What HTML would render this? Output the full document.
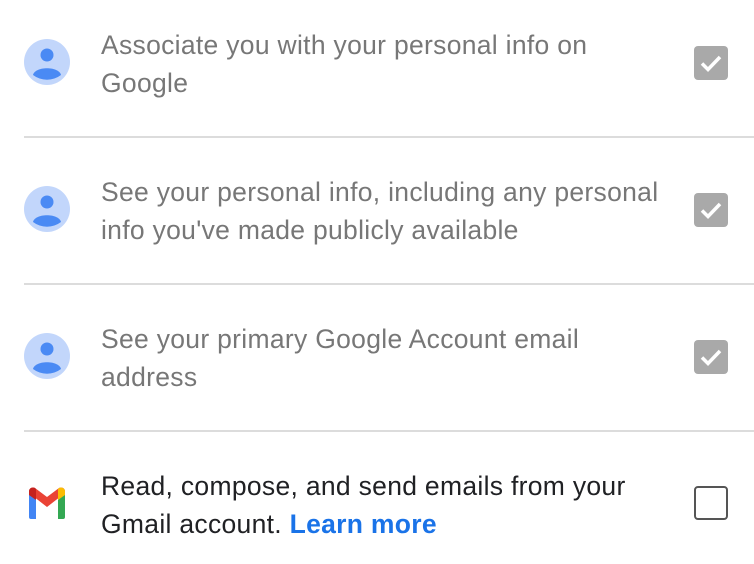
<!DOCTYPE html>
<html><head><meta charset="utf-8"><style>
body{margin:0;width:754px;height:564px;background:#fff;font-family:"Liberation Sans",Arial,sans-serif;overflow:hidden;position:relative}
.row{position:absolute;left:0;width:754px}
.txt{position:absolute;left:101px;font-size:26.5px;line-height:38px;color:#777;white-space:nowrap;letter-spacing:0.3px}
.av{position:absolute;left:24px;width:46px;height:46px}
.cb{position:absolute;left:694px;width:34px;height:34px}
.hr{position:absolute;left:24px;right:0;height:2px;background:#dcdcdc}
</style></head><body>
<div class="row" style="top:0">
<svg class="av" style="top:39px" viewBox="0 0 46 46"><circle cx="23" cy="23" r="23" fill="#c2d6fb"/><circle cx="23" cy="16" r="6.5" fill="#4a8af4"/><path d="M9 36 C11 27 35 27 37 36 A23 23 0 0 1 9 36Z" fill="#4a8af4"/></svg>
<div class="txt" style="top:26px">Associate you with your personal info on<br>Google</div>
<svg class="cb" style="top:46px" viewBox="0 0 34 34"><rect width="34" height="34" rx="4" fill="#a9a9a9"/><path d="M8 17.5 L14 23.5 L26 11" stroke="#fff" stroke-width="3.5" fill="none"/></svg>
</div>
<div class="hr" style="top:136px"></div>
<div class="row" style="top:147px">
<svg class="av" style="top:39px" viewBox="0 0 46 46"><circle cx="23" cy="23" r="23" fill="#c2d6fb"/><circle cx="23" cy="16" r="6.5" fill="#4a8af4"/><path d="M9 36 C11 27 35 27 37 36 A23 23 0 0 1 9 36Z" fill="#4a8af4"/></svg>
<div class="txt" style="top:26px">See your personal info, including any personal<br>info you've made publicly available</div>
<svg class="cb" style="top:46px" viewBox="0 0 34 34"><rect width="34" height="34" rx="4" fill="#a9a9a9"/><path d="M8 17.5 L14 23.5 L26 11" stroke="#fff" stroke-width="3.5" fill="none"/></svg>
</div>
<div class="hr" style="top:283px"></div>
<div class="row" style="top:294px">
<svg class="av" style="top:39px" viewBox="0 0 46 46"><circle cx="23" cy="23" r="23" fill="#c2d6fb"/><circle cx="23" cy="16" r="6.5" fill="#4a8af4"/><path d="M9 36 C11 27 35 27 37 36 A23 23 0 0 1 9 36Z" fill="#4a8af4"/></svg>
<div class="txt" style="top:26px">See your primary Google Account email<br>address</div>
<svg class="cb" style="top:46px" viewBox="0 0 34 34"><rect width="34" height="34" rx="4" fill="#a9a9a9"/><path d="M8 17.5 L14 23.5 L26 11" stroke="#fff" stroke-width="3.5" fill="none"/></svg>
</div>
<div class="hr" style="top:430px"></div>
<div class="row" style="top:441px">
<svg style="position:absolute;left:26px;top:45px" width="42" height="35" viewBox="0 0 42 33">
<path d="M3 6 V30 a2 2 0 0 0 2 2 H10 V13Z" fill="#4285f4"/>
<path d="M39 6 V30 a2 2 0 0 1 -2 2 H32 V13Z" fill="#34a853"/>
<path d="M3 6 L21 20 L39 6 V4 a4 4 0 0 0 -6 -3 L21 10 L9 1 a4 4 0 0 0 -6 3Z" fill="#ea4335"/>
<path d="M3 4 a4 4 0 0 1 6 -3 L10 2 V13 L3 8Z" fill="#c5221f"/>
<path d="M39 4 a4 4 0 0 0 -6 -3 L32 2 V13 L39 8Z" fill="#fbbc04"/>
</svg>
<div class="txt" style="top:26px;color:#202124">Read, compose, and send emails from your<br>Gmail account. <span style="color:#1a73e8;font-weight:bold">Learn more</span></div>
<div style="position:absolute;left:694px;top:45px;width:30px;height:30px;border:2px solid #555;border-radius:4px"></div>
</div>
</body></html>
